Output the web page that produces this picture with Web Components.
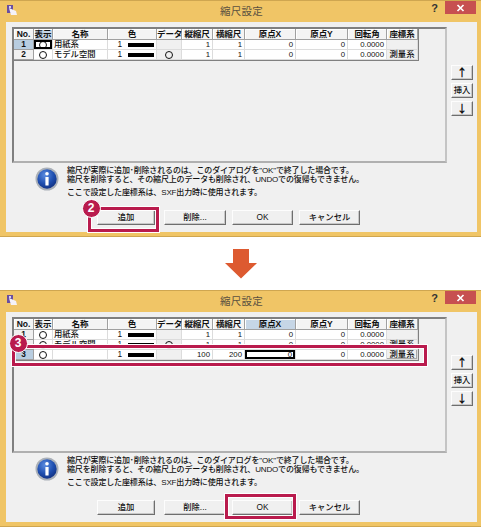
<!DOCTYPE html>
<html lang="ja">
<head>
<meta charset="utf-8">
<title>縮尺設定</title>
<style>
  html, body { margin: 0; padding: 0; background: #fff; }
  body { width: 481px; height: 527px; overflow: hidden; font-family: "Liberation Sans", "Noto Sans CJK JP", sans-serif; }
</style>
</head>
<body>
<scale-dialog active-col="表示" active-cell="1:1" selected-row="1" rows='[["1","用紙系","1","","1","1","0","0","0.0000",""],["2","モデル空間","1","○","1","1","0","0","0.0000","測量系"]]'>
  <red-box x="88" y="206" w="71" h="25"></red-box>
  <step-badge x="91" y="207">2</step-badge>
</scale-dialog>
<flow-arrow></flow-arrow>
<scale-dialog active-col="原点X" active-cell="3:7" selected-row="3" rows='[["1","用紙系","1","","1","1","0","0","0.0000",""],["2","モデル空間","1","○","1","1","0","0","0.0000","測量系"],["3","","1","","100","200","0","0","0.0000","測量系"]]'>
  <red-box x="12" y="54" w="415" h="21"></red-box>
  <step-badge x="18" y="52">3</step-badge>
  <red-box x="225" y="203" w="71" h="25"></red-box>
</scale-dialog>

<template id="tpl-dialog">
  <style>
    :host { display: block; position: relative; box-sizing: border-box; width: 481px; height: 237px; background: #f0c566; border-top: 1px solid #cfa650; border-bottom: 1px solid #cfa650; font-family: "Liberation Sans", "Noto Sans CJK JP", sans-serif; }
    .titlebar { height: 21px; display: flex; align-items: flex-start; position: relative; }
    .icon { margin: 4px 0 0 7px; flex: none; }
    .title { flex: 1; text-align: center; font-size: 10.5px; line-height: 20px; color: #5a5140; padding-left: 36px; letter-spacing: .2px; }
    .help { flex: none; width: 11px; font: bold 11px/14px "Liberation Sans", sans-serif; color: #333; margin-right: 5px; text-align: center; }
    .close { flex: none; width: 31px; height: 13px; margin-right: 5px; background: #c75050; display: flex; align-items: center; justify-content: center; }
    .client { margin: 0 4px 0 6px; height: 210px; background: #f0f0f0; box-sizing: border-box; padding-top: 5px; display: flex; flex-direction: column; }
    .top { display: flex; gap: 4px; height: 136px; padding-left: 6px; }
    .side { display: flex; flex-direction: column; gap: 3px; padding-top: 38px; }
    .note { display: flex; margin-top: 3px; height: 41px; padding-left: 29px; gap: 8px; color: #111; font-size: 8px; font-weight: 500; }
    .note svg { flex: none; margin-top: 1px; }
    .lines { margin-top: 0; line-height: 9px; white-space: nowrap; letter-spacing: -.15px; }
    .lines p { margin: 0; }
    .lines p.gap { margin-top: 4px; }
    .actions { display: flex; padding-left: 91px; margin-top: 3px; }
    .actions win-button:nth-child(1) { width: 58px; margin-right: 9px; }
    .actions win-button:nth-child(2) { width: 62px; margin-right: 6px; }
    .actions win-button:nth-child(3) { width: 61px; margin-right: 6px; }
    .actions win-button:nth-child(4) { width: 61px; }
    .side win-button { width: 22px; height: 15px; }
  </style>
  <div class="titlebar">
    <svg class="icon" width="11" height="11" viewBox="0 0 11 11">
      <rect x="0" y="0" width="6" height="8" fill="#6a4fa0"/>
      <path d="M2 3 L9 6 L10 10 L4 10 Z" fill="#f4f2f8"/>
      <path d="M2 1h2v2h-2z" fill="#d9d0ec"/>
    </svg>
    <div class="title">縮尺設定</div>
    <div class="help">?</div>
    <div class="close"><svg width="9" height="8" viewBox="0 0 9 8"><path d="M1.5 1 L7.5 7 M7.5 1 L1.5 7" stroke="#fff" stroke-width="1.7"/></svg></div>
  </div>
  <div class="client">
    <div class="top">
      <scale-grid></scale-grid>
      <div class="side">
        <win-button class="big">↑</win-button>
        <win-button>挿入</win-button>
        <win-button class="big">↓</win-button>
      </div>
    </div>
    <div class="note">
      <svg width="24" height="24" viewBox="0 0 24 24">
        <defs>
          <radialGradient id="ib" cx=".4" cy=".3" r=".8"><stop offset="0" stop-color="#5c8de0"/><stop offset=".55" stop-color="#1f4fb0"/><stop offset="1" stop-color="#0e2a78"/></radialGradient>
        </defs>
        <circle cx="12" cy="12" r="11.5" fill="#aab0b8"/>
        <circle cx="12" cy="12" r="9.7" fill="url(#ib)"/>
        <circle cx="12" cy="6.8" r="1.8" fill="#fff"/>
        <rect x="10.4" y="10" width="3.2" height="8.5" rx=".5" fill="#fff"/>
      </svg>
      <div class="lines">
        <p>縮尺が実際に追加･削除されるのは、このダイアログを"OK"で終了した場合です。</p>
        <p>縮尺を削除すると、その縮尺上のデータも削除され、UNDOでの復帰もできません。</p>
        <p class="gap">ここで設定した座標系は、SXF出力時に使用されます。</p>
      </div>
    </div>
    <div class="actions">
      <win-button>追加</win-button>
      <win-button>削除...</win-button>
      <win-button>OK</win-button>
      <win-button>キャンセル</win-button>
    </div>
  </div>
  <slot></slot>
</template>

<template id="tpl-grid">
  <style>
    :host { display: block; box-sizing: border-box; width: 435px; height: 136px; background: #f0f0f0; border: 2px solid; border-color: #808080 #c4c4c4 #b0b0b0 #808080; font-family: "Liberation Sans", "Noto Sans CJK JP", sans-serif; font-size: 8.3px; font-weight: 500; color: #111; }
    .table { display: inline-grid; grid-template-columns: 20px 19px 55px 49px 25px 31px 32px 51px 52px 39px 31px; grid-auto-rows: 10px; border-right: 1px solid #808080; border-bottom: 1px solid #808080; margin-right: -1px; }
    .cell { box-sizing: border-box; background: #fff; border-right: 1px solid #dcdcdc; border-bottom: 1px solid #dcdcdc; line-height: 9px; white-space: nowrap; position: relative; }
    .head { height: 11px; background: #f4f4f4; border-right: 1px solid #a0a0a0; border-bottom: 1px solid #a0a0a0; box-shadow: inset 1px 1px 0 #fff; text-align: center; font-size: 8.5px; font-weight: 700; line-height: 10px; letter-spacing: -.1px; }
    .head.on { background: #c6d6e6; }
    .no { background: #f0f0f0; text-align: center; font-weight: 700; border-right-color: #a0a0a0; border-bottom-color: #a0a0a0; }
    .no.on { background: #b8cde0; }
    .num { text-align: right; padding-right: 2px; font-size: 7.8px; }
    .num.cur { padding-right: 3px; }
    .txt { padding-left: 1px; }
    .mark { display: flex; align-items: center; justify-content: center; }
    .ring { display: block; box-sizing: border-box; width: 8px; height: 8px; border: 1px solid #111; border-radius: 50%; }
    .gray { background: #f0f0f0; }
    .btn { background: #f0f0f0; text-align: center; }
    .btn.raised { box-shadow: inset -1px -1px 0 #a8a8a8; }
    .color { display: flex; align-items: center; }
    .color span { width: 14px; text-align: right; }
    .color i { display: block; width: 26px; height: 4px; margin-left: 6px; background: #000; }
    .cur::after { content: ""; position: absolute; inset: 0; box-shadow: inset 0 0 0 2px #000; }
  </style>
  <div class="table" role="grid"></div>
</template>

<template id="tpl-button">
  <style>
    :host { display: block; box-sizing: border-box; height: 15px; background: #f0f0f0; border: 1px solid; border-color: #fdfdfd #6e6e6e #6e6e6e #fdfdfd; box-shadow: inset -1px -1px 0 #c8c8c8; font-size: 8.3px; font-weight: 500; line-height: 13px; text-align: center; color: #111; white-space: nowrap; font-family: "Liberation Sans", "Noto Sans CJK JP", sans-serif; }
    :host(.big) { font-size: 11px; font-weight: 700; line-height: 12px; font-family: "Noto Sans CJK JP", "Liberation Sans", sans-serif; }
  </style>
  <slot></slot>
</template>

<template id="tpl-redbox">
  <style>
    :host { display: block; position: absolute; box-sizing: border-box; border: 3px solid #b91b4d; outline: 1px solid #fff; pointer-events: none; z-index: 3; box-shadow: inset 0 0 0 1px rgba(255,255,255,.9); }
  </style>
</template>

<template id="tpl-badge">
  <style>
    :host { display: flex; position: absolute; box-sizing: border-box; width: 19px; height: 19px; margin: -9.5px 0 0 -9.5px; border-radius: 50%; background: #b91b4d; border: 1.5px solid #fff; color: #fff; align-items: center; justify-content: center; font: 700 12px/1 "Liberation Sans", sans-serif; z-index: 4; }
  </style>
  <slot></slot>
</template>

<template id="tpl-arrow">
  <style>
    :host { display: block; height: 53px; box-sizing: border-box; padding-top: 12px; text-align: center; }
    svg { display: block; margin: 0 auto; }
  </style>
  <svg width="32" height="30" viewBox="0 0 32 30"><path d="M8 0H24V14H32L16 29.5L0 14H8Z" fill="#dd5a30"/></svg>
</template>

<script>
  const mount = (el, id) => {
    const root = el.attachShadow({ mode: 'open' });
    root.appendChild(document.getElementById(id).content.cloneNode(true));
    return root;
  };
  const HEADS = ['No.', '表示', '名称', '色', 'データ', '縦縮尺', '横縮尺', '原点X', '原点Y', '回転角', '座標系'];

  class ScaleGrid extends HTMLElement {
    constructor() { super(); mount(this, 'tpl-grid'); }
    render({ rows, activeCol, activeCell, selectedRow }) {
      const table = this.shadowRoot.querySelector('.table');
      table.style.gridTemplateRows = '11px';
      const add = (cls, text) => {
        const d = document.createElement('div');
        d.className = 'cell ' + cls;
        if (text !== undefined) d.textContent = text;
        table.appendChild(d);
        return d;
      };
      const ring = cell => {
        const r = document.createElement('i');
        r.className = 'ring';
        cell.appendChild(r);
      };
      HEADS.forEach(h => add('head' + (h === activeCol ? ' on' : ''), h));
      const [curRow, curCol] = activeCell.split(':').map(Number);
      rows.forEach(r => {
        const [no, name, weight, data, sy, sx, ox, oy, rot, sys] = r;
        const cur = c => (Number(no) === curRow && c === curCol) ? ' cur' : '';
        add('no' + (no === selectedRow ? ' on' : ''), no);
        ring(add('mark' + cur(1)));
        add('txt', name);
        const color = add('color');
        const n = document.createElement('span'); n.textContent = weight;
        color.append(n, document.createElement('i'));
        const dataCell = add('mark gray');
        if (data) ring(dataCell);
        add('num', sy);
        add('num', sx);
        add('num' + cur(7), ox);
        add('num', oy);
        add('num', rot);
        add(sys ? 'btn' + (no === '3' ? ' raised' : '') : 'gray', sys);
      });
    }
  }

  class ScaleDialog extends HTMLElement {
    constructor() { super(); mount(this, 'tpl-dialog'); }
    connectedCallback() {
      this.shadowRoot.querySelector('scale-grid').render({
        rows: JSON.parse(this.getAttribute('rows')),
        activeCol: this.getAttribute('active-col'),
        activeCell: this.getAttribute('active-cell'),
        selectedRow: this.getAttribute('selected-row')
      });
    }
  }

  class WinButton extends HTMLElement {
    constructor() { super(); mount(this, 'tpl-button'); }
  }

  class RedBox extends HTMLElement {
    constructor() { super(); mount(this, 'tpl-redbox'); }
    connectedCallback() {
      const s = this.style, a = n => this.getAttribute(n) + 'px';
      s.left = a('x'); s.top = a('y'); s.width = a('w'); s.height = a('h');
    }
  }

  class StepBadge extends HTMLElement {
    constructor() { super(); mount(this, 'tpl-badge'); }
    connectedCallback() {
      this.style.left = this.getAttribute('x') + 'px';
      this.style.top = this.getAttribute('y') + 'px';
    }
  }

  class FlowArrow extends HTMLElement {
    constructor() { super(); mount(this, 'tpl-arrow'); }
  }

  customElements.define('win-button', WinButton);
  customElements.define('scale-grid', ScaleGrid);
  customElements.define('red-box', RedBox);
  customElements.define('step-badge', StepBadge);
  customElements.define('flow-arrow', FlowArrow);
  customElements.define('scale-dialog', ScaleDialog);
</script>
</body>
</html>
